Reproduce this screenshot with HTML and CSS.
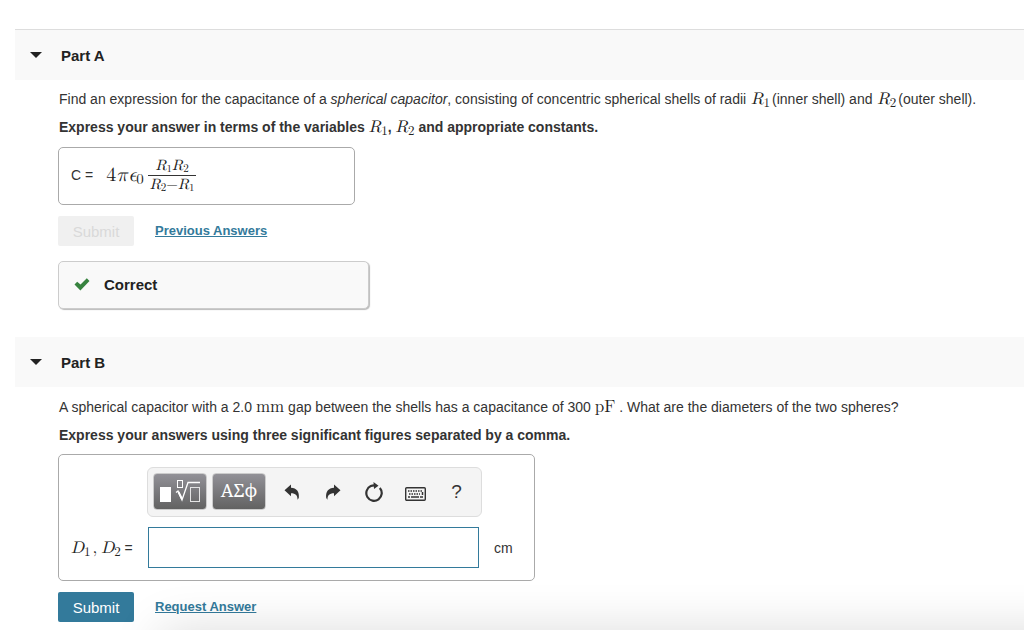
FILE: index.html
```html
<!DOCTYPE html>
<html lang="en">
<head>
<meta charset="utf-8">
<meta name="viewport" content="width=device-width, initial-scale=1">
<title>Spherical Capacitor</title>
<link rel="stylesheet" href="styles.css">
</head>
<body>
<main class="problem">
  <section class="part">
    <h2 class="part-header part-header-first">
      <button class="part-toggle" type="button" aria-expanded="true"><span class="caret"></span>Part A</button>
    </h2>
    <div class="part-body">
      <p class="prompt">Find an expression for the capacitance of a <em>spherical capacitor</em>, consisting of concentric spherical shells of radii <span class="math variable"><i>R</i><sub>1</sub></span>(inner shell) and <span class="math variable"><i>R</i><sub>2</sub></span>(outer shell).</p>
      <p class="prompt instructions">Express your answer in terms of the variables <span class="math"><i>R</i><sub>1</sub></span>, <span class="math"><i>R</i><sub>2</sub></span> and appropriate constants.</p>
      <div class="answer answer-done">
        <span class="answer-label">C =</span>
        <span class="math formula">4<i>πϵ</i><sub>0</sub></span>
        <span class="math fraction">
          <span class="numerator"><i>R</i><sub>1</sub><i>R</i><sub>2</sub></span>
          <span class="denominator"><i>R</i><sub>2</sub>−<i>R</i><sub>1</sub></span>
        </span>
      </div>
      <div class="actions">
        <button class="submit" type="button" disabled>Submit</button>
        <a class="link" href="#previous">Previous Answers</a>
      </div>
      <div class="feedback">
        <svg class="check" viewBox="0 0 16 13" aria-hidden="true"><path d="M.5 6.500 3.200 3.800l3.300 2.800L12.800.300l2.700 2.700L6.400 12.400z"/></svg>
        <span>Correct</span>
      </div>
    </div>
  </section>

  <section class="part">
    <h2 class="part-header">
      <button class="part-toggle" type="button" aria-expanded="true"><span class="caret"></span>Part B</button>
    </h2>
    <div class="part-body part-body-entry">
      <p class="prompt">A spherical capacitor with a 2.0 <span class="math">mm</span> gap between the shells has a capacitance of 300 <span class="math">pF</span> . What are the diameters of the two spheres?</p>
      <p class="prompt instructions">Express your answers using three significant figures separated by a comma.</p>
      <div class="answer answer-entry">
        <div class="toolbar" role="toolbar" aria-label="Equation editor">
          <button class="palette" type="button" aria-label="Templates">
            <svg class="template-icon" viewBox="0 0 42 24" aria-hidden="true">
              <rect x="1" y="7" width="11" height="15" fill="#fff"/>
              <g fill="none" stroke="#fff">
                <rect x="18.500" y=".5" width="5" height="7"/>
                <path d="M17 12.500l2-1.500 4 9L29 2.500H41" stroke-width="1.300"/>
                <rect x="31.500" y="7.500" width="9" height="14" stroke="#e4e4e4"/>
                <path d="M19.500 12l3.500 7" stroke-width="2"/>
              </g>
            </svg>
          </button>
          <button class="palette greek" type="button">ΑΣϕ</button>
          <button class="tool" type="button" aria-label="Undo"><svg viewBox="0 0 16 16" width="16" height="16" aria-hidden="true"><path d="M.5 6.200 7 .6v3.200c5.500.1 8.600 4 7.800 10.200l-1.300 1.800c.2-4.300-1.800-6.600-6.500-6.600v3z"/></svg></button>
          <button class="tool" type="button" aria-label="Redo"><svg viewBox="0 0 16 16" width="16" height="16" aria-hidden="true"><path d="M15.500 6.200 9 .6v3.200C3.500 3.900.4 7.800 1.200 14l1.300 1.800c-.2-4.300 1.800-6.600 6.500-6.600v3z"/></svg></button>
          <button class="tool" type="button" aria-label="Reset"><svg viewBox="0 0 20 20" width="20" height="20" aria-hidden="true"><path d="M15.800 6a7.700 7.700 0 1 1-9-1.900Q8.500 3.300 11 3.400" fill="none" stroke="#333" stroke-width="2.200"/><path d="M9.500 0l5 3.700L10 7z"/></svg></button>
          <button class="tool tool-keyboard" type="button" aria-label="Keyboard shortcuts"><svg viewBox="0 0 21 14" width="21" height="14" aria-hidden="true"><rect x=".7" y=".7" width="19.600" height="12.600" rx="1" fill="none" stroke="#333" stroke-width="1.400"/><path d="M3 4h15M4 7h11" fill="none" stroke="#333" stroke-width="1.600" stroke-dasharray="1.500 1"/><path d="M3 10h2m1 0h8m1 0h3M17.500 5v3" fill="none" stroke="#333" stroke-width="1.500"/></svg></button>
          <button class="tool tool-help" type="button" aria-label="Help">?</button>
        </div>
        <label class="answer-label" for="diameters"><span class="math"><i>D</i><sub>1</sub><span class="comma">,</span><i>D</i><sub>2</sub></span> =</label>
        <input class="answer-input" id="diameters" type="text">
        <span class="unit">cm</span>
      </div>
      <div class="actions">
        <button class="submit" type="button">Submit</button>
        <a class="link" href="#request">Request Answer</a>
      </div>
    </div>
  </section>
</main>
<div class="bottom-shade"></div>
</body>
</html>
```
FILE: styles.css
```css
* { box-sizing: border-box; }

body {
  margin: 0;
  background: #fff;
  color: #333;
  font: 14px/20px "Liberation Sans", Arial, sans-serif;
  overflow: hidden;
}

button, input { font-family: inherit; }

.problem { padding: 29px 0 0 15px; }

.part { margin-bottom: 28px; }

.part-header {
  margin: 0;
  background: #f9f9f9;
}

.part-header-first { border-top: 1px solid #ddd; }

.part-toggle {
  display: flex;
  align-items: center;
  gap: 19px;
  width: 100%;
  height: 50px;
  padding: 0 15px;
  border: 0;
  background: none;
  color: #222;
  font-size: 15px;
  font-weight: bold;
}

.caret {
  border: 6px solid transparent;
  border-top: 6px solid #222;
  border-bottom: 0;
}

.part-body { padding: 9px 0 0 43px; }

.part-body-entry { padding-top: 10px; }

.prompt {
  margin: 0 0 8px;
  height: 20px;
  padding-left: 1px;
  white-space: nowrap;
}

.instructions {
  margin-bottom: 10px;
  font-weight: bold;
}

.part-body-entry .instructions { margin-bottom: 9px; }

.math {
  color: #222;
  font-family: "Latin Modern Math", "Liberation Serif", serif;
  font-size: 17px;
  font-weight: normal;
  line-height: 20px;
}

.variable {
  margin: 0 2px 0 1px;
}

.math sub {
  font-size: 13px;
  line-height: 0;
  vertical-align: -3px;
}

.comma { margin: 0 4px 0 2px; }

.answer {
  border: 1px solid #aaa;
  border-radius: 5px;
}

.answer-done {
  display: flex;
  align-items: center;
  width: 297px;
  height: 58px;
  padding: 0 12px 2px;
}

.formula {
  margin: 0 4px 0 13px;
  font-size: 20px;
}

.formula sub { font-size: 15px; }

.fraction {
  display: flex;
  flex-direction: column;
  text-align: center;
  font-size: 15px;
  line-height: 18px;
}

.fraction sub {
  font-size: 11px;
  vertical-align: -2px;
}

.numerator { border-bottom: 1px solid #333; }

.denominator { padding: 0 2px; }

.actions {
  display: flex;
  align-items: center;
  gap: 21px;
  margin: 11px 0 15px;
}

.submit {
  width: 76px;
  height: 30px;
  padding: 0;
  border: 0;
  border-radius: 2px;
  background: #337a9b;
  color: #fff;
  font-size: 15px;
}

.submit:disabled {
  background: #f0f0f0;
  color: #d9d9d9;
}

.link {
  color: #337a9b;
  font-size: 13px;
  font-weight: bold;
}

.feedback {
  display: flex;
  align-items: center;
  gap: 14px;
  width: 311px;
  height: 48px;
  padding: 0 15px 1px;
  border: 1px solid #ccc;
  border-radius: 5px;
  background: #f9f9f9;
  box-shadow: 1px 1px 1px #bbb;
  color: #222;
  font-size: 15px;
  font-weight: bold;
}

.check {
  width: 16px;
  height: 13px;
  fill: #37833f;
}

.answer-entry {
  display: grid;
  grid-template-columns: 77px 331px 1fr;
  align-items: center;
  row-gap: 10px;
  width: 477px;
  padding: 12px;
}

.toolbar {
  grid-column: 2 / 4;
  display: flex;
  align-items: center;
  width: 335px;
  height: 50px;
  margin-left: -1px;
  padding: 0 5px 1px;
  border: 1px solid #ddd;
  border-radius: 6px;
  background: #f4f4f4;
}

.palette {
  width: 54px;
  height: 37px;
  margin-right: 5px;
  padding: 0;
  border: 1px solid #ccc;
  border-radius: 4px;
  background: linear-gradient(#929197, #626262);
  color: #fff;
}

.template-icon {
  display: block;
  width: 42px;
  height: 24px;
  margin: 0 auto;
}

.greek {
  padding-bottom: 3px;
  font-family: "Noto Serif", "Liberation Serif", serif;
  font-size: 18px;
}

.tool {
  display: flex;
  align-items: center;
  justify-content: center;
  width: 41px;
  height: 36px;
  padding: 0;
  border: 0;
  background: none;
  color: #333;
  fill: #333;
}

.tool-keyboard { padding: 4px 0 0 2px; }

.tool-help {
  padding-left: 2px;
  font-size: 19px;
}

.answer-input {
  width: 100%;
  height: 41px;
  padding: 0 8px;
  border: 1px solid #337a9b;
  background: #fff;
  font-size: 16px;
}

.unit { padding-left: 15px; }

.bottom-shade {
  position: fixed;
  top: 100%;
  left: 160px;
  right: -60px;
  height: 60px;
  box-shadow: 0 0 50px rgba(0, 0, 0, 0.14);
  pointer-events: none;
}
```
